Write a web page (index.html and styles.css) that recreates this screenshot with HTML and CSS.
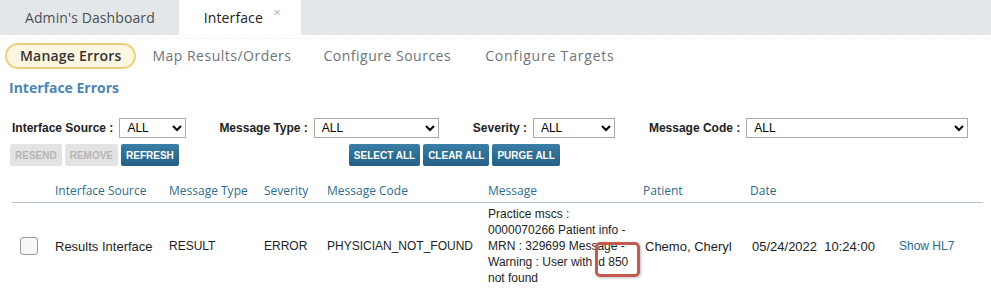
FILE: index.html
```html
<!DOCTYPE html>
<html lang="en">

<head>
    <meta charset="UTF-8">
    <meta name="viewport" content="width=device-width, initial-scale=1.0">
    <title>Interface Errors</title>
    <link rel="stylesheet" href="styles.css">
</head>

<body>
    <div class="tabs">
        <div class="tab">Admin's Dashboard</div>
        <div class="tab active">Interface <span class="close">&times;</span></div>
    </div>

    <div class="subnav">
        <a class="nav-link current">Manage Errors</a>
        <a class="nav-link">Map Results/Orders</a>
        <a class="nav-link">Configure Sources</a>
        <a class="nav-link">Configure Targets</a>
    </div>

    <h2 class="page-title">Interface Errors</h2>

    <div class="filters">
        <label>Interface Source :</label>
        <select class="sel-source"><option>ALL</option></select>
        <label>Message Type :</label>
        <select class="sel-type"><option>ALL</option></select>
        <label>Severity :</label>
        <select class="sel-severity"><option>ALL</option></select>
        <label>Message Code :</label>
        <select class="sel-code"><option>ALL</option></select>
    </div>

    <div class="actions">
        <div class="btn-group">
            <button class="btn" disabled>RESEND</button>
            <button class="btn" disabled>REMOVE</button>
            <button class="btn primary">REFRESH</button>
        </div>
        <div class="btn-group right">
            <button class="btn primary">SELECT ALL</button>
            <button class="btn primary">CLEAR ALL</button>
            <button class="btn primary">PURGE ALL</button>
        </div>
    </div>

    <table class="errors">
        <colgroup>
            <col style="width:43px">
            <col style="width:114px">
            <col style="width:95px">
            <col style="width:63px">
            <col style="width:161px">
            <col style="width:155px">
            <col style="width:107px">
            <col style="width:149px">
            <col style="width:84px">
        </colgroup>
        <thead>
            <tr>
                <th></th>
                <th>Interface Source</th>
                <th>Message Type</th>
                <th>Severity</th>
                <th>Message Code</th>
                <th>Message</th>
                <th>Patient</th>
                <th>Date</th>
                <th></th>
            </tr>
        </thead>
        <tbody>
            <tr>
                <td><span class="check"></span></td>
                <td class="big">Results Interface</td>
                <td>RESULT</td>
                <td>ERROR</td>
                <td class="code">PHYSICIAN_NOT_FOUND</td>
                <td>
                    <div class="msg">
                        Practice mscs : 0000070266 Patient info - MRN : 329699 Message - Warning : User with id 850 not found
                        <span class="mark"></span>
                    </div>
                </td>
                <td class="big patient">Chemo, Cheryl</td>
                <td class="big date">05/24/2022&nbsp;&nbsp;10:24:00</td>
                <td><a class="link">Show HL7</a></td>
            </tr>
        </tbody>
    </table>
</body>

</html>
```

FILE: styles.css
```css
* {
    padding: 0;
    margin: 0;
    box-sizing: border-box;
}

body {
    background-color: #fff;
    font-family: Arial, "Liberation Sans", sans-serif;
    font-size: 12px;
    color: #222;
}

/* top tabs */
.tabs {
    display: flex;
    height: 35px;
    background-color: #e4e7e9;
    font-family: "Open Sans", sans-serif;
    font-size: 14px;
    color: #4a4f54;
}

.tab {
    padding: 0 24px 0 25px;
    line-height: 35px;
    letter-spacing: 0.1px;
}

.tab.active {
    background-color: #fff;
    color: #222;
    padding-right: 20px;
}

.close {
    position: relative;
    top: -6px;
    margin-left: 7px;
    font-size: 13px;
    color: #a8adb2;
}

/* sub navigation */
.subnav {
    display: flex;
    align-items: center;
    margin-top: 3px;
    padding: 4px 0 0 5px;
    border-top: 1px dashed #eef0f2;
    font-family: "Open Sans", sans-serif;
    font-size: 14px;
}

.nav-link {
    padding: 0 16px;
    line-height: 26px;
    color: #6d747a;
    letter-spacing: 0.5px;
}

.nav-link:last-child {
    margin-left: 2px;
    letter-spacing: 0.8px;
}

.nav-link.current {
    padding: 0 13px;
    line-height: 22px;
    border: 2px solid #ead27c;
    border-radius: 14px;
    background-color: #fdf6e1;
    color: #333;
    font-weight: 600;
    letter-spacing: 0.2px;
}

.page-title {
    margin: 9px 0 0 9px;
    font-family: "Open Sans", sans-serif;
    font-size: 14px;
    font-weight: 700;
    line-height: 20px;
    color: #4c86b4;
}

/* filters */
.filters {
    display: flex;
    align-items: center;
    margin-top: 20px;
    padding-left: 12px;
}

.filters label {
    font-weight: bold;
    margin-right: 6px;
}

.filters select {
    height: 20px;
    border: 1px solid #a9a9a9;
    border-radius: 0;
    background-color: #fff;
    font-family: Arial, "Liberation Sans", sans-serif;
    font-size: 12px;
    padding-left: 3px;
}

.sel-source {
    width: 67px;
    margin-right: 33px;
}

.sel-type {
    width: 125px;
    margin-right: 34px;
}

.sel-severity {
    width: 82px;
    margin-right: 34px;
}

.sel-code {
    width: 222px;
}

/* buttons */
.actions {
    display: flex;
    margin-top: 6px;
    padding-left: 10px;
}

.btn-group {
    display: flex;
    gap: 3px;
}

.btn-group.right {
    margin-left: 170px;
}

.btn {
    height: 22px;
    padding: 0 5px;
    border: 0;
    border-radius: 2px;
    font-family: Arial, "Liberation Sans", sans-serif;
    font-size: 10px;
    font-weight: bold;
    background-color: #e3e3e3;
    color: #b5b5b5;
}

.btn.primary {
    background: linear-gradient(#3b7ea6, #235f84);
    color: #fff;
}

/* table */
.errors {
    margin: 16px 0 0 12px;
    width: 971px;
    table-layout: fixed;
    border-collapse: collapse;
}

.errors th {
    text-align: left;
    font-family: "Open Sans", sans-serif;
    font-size: 12px;
    font-weight: 400;
    color: #2d6d8c;
    padding-bottom: 3px;
    border-bottom: 1px solid #b9c4cb;
    white-space: nowrap;
}

.errors td {
    vertical-align: middle;
    padding: 3px 0 13px;
    color: #1e1e1e;
}

.errors td.big {
    font-size: 13px;
}

.check {
    display: block;
    width: 18px;
    height: 18px;
    margin-left: 8px;
    border: 1px solid #9a9a9a;
    border-radius: 3px;
    background-color: #f7f7f7;
}

.code {
    color: #236a96;
}

.msg {
    position: relative;
    padding-right: 10px;
    line-height: 16px;
}

.mark {
    position: absolute;
    left: 107px;
    top: 36px;
    width: 45px;
    height: 35px;
    border: 3px solid #c25a50;
    border-radius: 5px;
    box-shadow: 1px 1px 3px rgba(0, 0, 0, 0.25);
}

.patient,
.date {
    padding-left: 2px !important;
}

.link {
    color: #2a6a96;
}
```
